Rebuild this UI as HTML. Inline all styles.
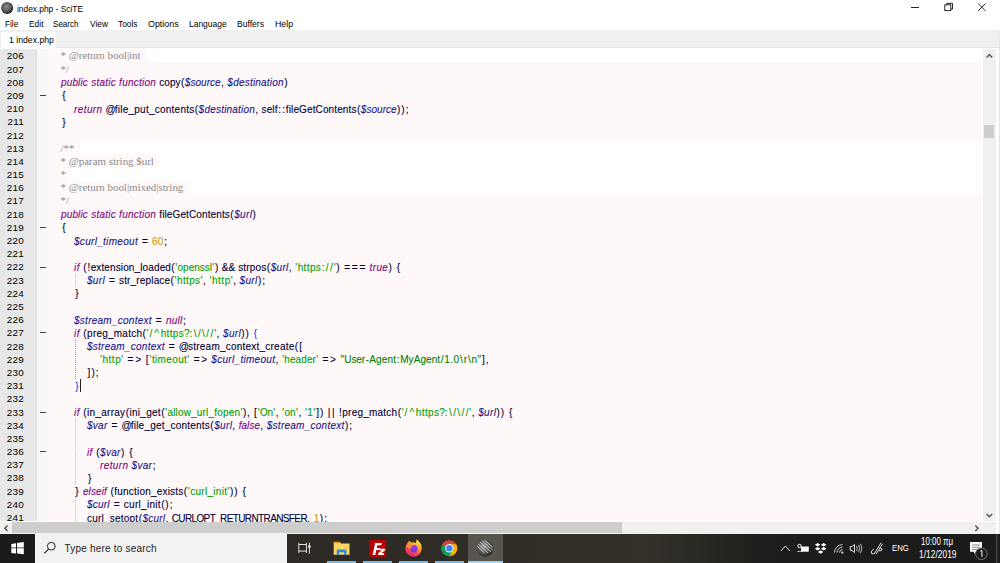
<!DOCTYPE html>
<html><head><meta charset="utf-8">
<style>
*{margin:0;padding:0;box-sizing:border-box}
html,body{width:1000px;height:563px;overflow:hidden;background:#fff;font-family:"Liberation Sans",sans-serif;position:relative}
div,span,svg{position:absolute}
.t{white-space:nowrap;line-height:12px}
#ttext{left:17px;top:3.0px;font-size:9.6px;color:#000;transform:scaleX(0.871);transform-origin:0 0}
.mi{top:17.5px;font-size:9.4px;color:#000;transform-origin:0 0}
#tabbar{left:0;top:29.8px;width:999.3px;height:18.7px;background:#f0f0f0;border-bottom:1.2px solid #e2e2e2}
#tab{left:1px;top:32px;width:55px;height:16.5px;background:#fff}
#tabt{left:9px;top:33.5px;font-size:9.4px;color:#000;transform:scaleX(0.926);transform-origin:0 0}
#editor{left:48px;top:48.5px;width:933.7px;height:472.8px;background:#fff8f8}
#lnm{left:0;top:48.5px;width:37px;height:472.8px;background:linear-gradient(90deg,#e7e7e7 0,#e7e7e7 35px,#e1e1e1 35px,#e1e1e1 37px)}
#fold{left:37px;top:48.5px;width:11px;height:472.8px;background:#f7f7f7}
#rwhite{left:981.5px;top:48.5px;width:1.5px;height:472.8px;background:#fff}
.ln{left:0;width:23.8px;text-align:right;font-size:9.9px;line-height:13.19px;height:13.19px;color:#000;letter-spacing:0.15px;white-space:nowrap}
.fm{left:40px;width:5.8px;height:1px;background:#444}
.cd{white-space:pre;font-size:10px;line-height:13.19px;height:13.19px;color:#000033;-webkit-text-stroke:0.1px}
.cd span{top:0}
.cw{height:13.19px;width:0;right:18.5px;background:#fff;width:auto}
.cl{left:60.6px;white-space:pre;font-family:"Liberation Serif",serif;font-size:10.9px;line-height:13.19px;height:13.19px;color:#8c8c8c}
.k{color:#7f007f;font-style:italic}
.v{color:#14148c;font-style:italic}
.s{color:#009f00}
.d{color:#007f00}
.n{color:#cc9900}
.b{color:#3030ff;background:#fff}
.ig{width:1.2px}
.caret{width:1px;background:#222}
#vsb{left:983px;top:48.5px;width:12.8px;height:472.8px;background:#f0f0f0}
#vthumb{left:983.5px;top:124.9px;width:10.3px;height:12.8px;background:#cdcdcd}
#rgrey{left:999.3px;top:29.8px;width:0.7px;height:504px;background:#e6e6e6}
#hsb{left:0;top:521.7px;width:995.8px;height:12.1px;background:#f0f0f0}
#hthumb{left:12.4px;top:522.4px;width:609.6px;height:10.7px;background:#cdcdcd}
#taskbar{left:0;top:533.8px;width:1000px;height:29.2px;background:linear-gradient(90deg,#2a2824 0px,#2d2a25 300px,#312e28 520px,#34312a 650px,#22211e 740px,#1c1c1c 790px,#1b1b1b 1000px)}
#start{left:0;top:533.8px;width:35px;height:29.2px;background:#1b1b1b}
#search{left:35px;top:533.8px;width:252px;height:29.2px;background:#f2f2f2}
#stext{left:64.5px;top:543px;font-size:10px;color:#1e1e1e;letter-spacing:0.2px}
.ul{top:561px;height:2px;background:#76b9ed}
#active{left:468.2px;top:533.8px;width:34.6px;height:29.2px;background:#58544e}
.tray{color:#fff;font-size:8.8px}
</style></head><body>
<svg style="left:0;top:0" width="16" height="16" viewBox="0 0 16 16">
<defs><radialGradient id="sph" cx="0.45" cy="0.42" r="0.6"><stop offset="0" stop-color="#8a8a8a"/><stop offset="0.6" stop-color="#4a4a4a"/><stop offset="1" stop-color="#141414"/></radialGradient></defs>
<clipPath id="tic"><circle cx="7.15" cy="7.9" r="5.6"/></clipPath>
<circle cx="7.15" cy="7.9" r="6" fill="url(#sph)"/>
<g clip-path="url(#tic)" stroke="#9a9a9a" stroke-width="0.6" opacity="0.6"><path d="M2 5 L10 13 M4 3 L12 11 M6.5 2 L13 8.5 M2 8 L7 13 M2 11 L10 3 M4 13 L12 5 M2 8 L8 2"/></g>
</svg>
<div id="ttext" class="t">index.php - SciTE</div>
<div class="mi t" style="left:5.4px;transform:scaleX(0.872)">File</div>
<div class="mi t" style="left:28.5px;transform:scaleX(0.895)">Edit</div>
<div class="mi t" style="left:53.4px;transform:scaleX(0.86)">Search</div>
<div class="mi t" style="left:89.5px;transform:scaleX(0.89)">View</div>
<div class="mi t" style="left:118px;transform:scaleX(0.889)">Tools</div>
<div class="mi t" style="left:148px;transform:scaleX(0.948)">Options</div>
<div class="mi t" style="left:189px;transform:scaleX(0.901)">Language</div>
<div class="mi t" style="left:237px;transform:scaleX(0.912)">Buffers</div>
<div class="mi t" style="left:274.7px;transform:scaleX(0.936)">Help</div>
<svg style="left:900px;top:0" width="100" height="20" viewBox="0 0 100 20">
<line x1="11" y1="7.5" x2="19" y2="7.5" stroke="#111" stroke-width="0.9"/>
<rect x="44.8" y="4.8" width="6" height="5.8" fill="none" stroke="#111" stroke-width="0.9"/>
<path d="M46.8 4.8 V3.3 H52.5 V9 H50.8" fill="none" stroke="#111" stroke-width="0.9"/>
<path d="M78.2 3.6 L85.5 10.8 M85.5 3.6 L78.2 10.8" stroke="#111" stroke-width="0.9"/>
</svg>
<div id="tabbar"></div>
<div id="tab"></div>
<div id="tabt" class="t">1 index.php</div>
<div id="lnm"></div>
<div id="fold"></div>
<div id="editor"></div>
<div id="rwhite"></div>
<div class="ln" style="top:49.40px">206</div>
<div class="cw" style="top:48.90px;left:146.03px"></div>
<div class="cl" style="top:49.40px">* @return bool|int</div>
<div class="ln" style="top:62.59px">207</div>
<div class="cl" style="top:62.59px">*/</div>
<div class="ln" style="top:75.78px">208</div>
<div class="cd" id="l208" style="top:76.28px;left:60.95px"><span class="k" style="left:0.00px;letter-spacing:0.128px;padding-left:0.064px">public</span><span class="k" style="left:30.11px;letter-spacing:0.233px;padding-left:0.117px">static</span><span class="k" style="left:58.07px;letter-spacing:0.244px;padding-left:0.122px">function</span><span class="" style="left:98.27px;letter-spacing:0.050px;padding-left:0.025px">copy</span><span class="" style="left:119.59px;letter-spacing:0.829px;padding-left:0.415px">(</span><span class="v" style="left:123.75px;letter-spacing:0.262px;padding-left:0.131px">$</span><span class="v" style="left:129.57px;letter-spacing:0.025px;padding-left:0.012px">source</span><span class="" style="left:159.74px;letter-spacing:0.558px;padding-left:0.279px">,</span><span class="v" style="left:166.29px;letter-spacing:0.262px;padding-left:0.131px">$</span><span class="v" style="left:172.12px;letter-spacing:0.210px;padding-left:0.105px">destination</span><span class="" style="left:222.80px;letter-spacing:0.829px;padding-left:0.415px">)</span></div>
<div class="ln" style="top:88.97px">209</div>
<div class="fm" style="top:95.07px"></div>
<div class="cd" id="l209" style="top:89.47px;left:60.95px"><span class="" style="left:0.00px;letter-spacing:2.484px;padding-left:1.242px">{</span></div>
<div class="ln" style="top:102.16px">210</div>
<div class="cd" id="l210" style="top:102.66px;left:73.90px"><span class="k" style="left:0.00px;letter-spacing:0.381px;padding-left:0.191px">return</span><span class="" style="left:31.63px;letter-spacing:-0.991px;padding-left:-0.496px">@</span><span class="" style="left:40.79px;letter-spacing:0.238px;padding-left:0.119px">file_put_contents</span><span class="" style="left:120.44px;letter-spacing:0.829px;padding-left:0.415px">(</span><span class="v" style="left:124.60px;letter-spacing:0.262px;padding-left:0.131px">$</span><span class="v" style="left:130.43px;letter-spacing:0.210px;padding-left:0.105px">destination</span><span class="" style="left:181.11px;letter-spacing:0.558px;padding-left:0.279px">,</span><span class="" style="left:187.67px;letter-spacing:0.090px;padding-left:0.045px">self</span><span class="" style="left:203.59px;letter-spacing:1.381px;padding-left:0.691px">:</span><span class="" style="left:207.75px;letter-spacing:1.381px;padding-left:0.691px">:</span><span class="" style="left:211.91px;letter-spacing:0.119px;padding-left:0.059px">fileGetContents</span><span class="" style="left:282.61px;letter-spacing:0.829px;padding-left:0.415px">(</span><span class="v" style="left:286.77px;letter-spacing:0.262px;padding-left:0.131px">$</span><span class="v" style="left:292.60px;letter-spacing:0.025px;padding-left:0.012px">source</span><span class="" style="left:322.76px;letter-spacing:0.829px;padding-left:0.415px">)</span><span class="" style="left:326.92px;letter-spacing:0.829px;padding-left:0.415px">)</span><span class="" style="left:331.08px;letter-spacing:1.381px;padding-left:0.691px">;</span></div>
<div class="ln" style="top:115.35px">211</div>
<div class="cd" id="l211" style="top:115.85px;left:60.95px"><span class="" style="left:0.00px;letter-spacing:2.484px;padding-left:1.242px">}</span></div>
<div class="ln" style="top:128.54px">212</div>
<div class="ln" style="top:141.73px">213</div>
<div class="cw" style="top:141.23px;left:79.93px"></div>
<div class="cl" style="top:141.73px">/**</div>
<div class="ln" style="top:154.92px">214</div>
<div class="cw" style="top:154.42px;left:159.28px"></div>
<div class="cl" style="top:154.92px">* @param string $url</div>
<div class="ln" style="top:168.11px">215</div>
<div class="cw" style="top:167.61px;left:71.45px"></div>
<div class="cl" style="top:168.11px">*</div>
<div class="ln" style="top:181.30px">216</div>
<div class="cw" style="top:180.80px;left:188.78px"></div>
<div class="cl" style="top:181.30px">* @return bool|mixed|string</div>
<div class="ln" style="top:194.49px">217</div>
<div class="cl" style="top:194.49px">*/</div>
<div class="ln" style="top:207.68px">218</div>
<div class="cd" id="l218" style="top:208.18px;left:60.95px"><span class="k" style="left:0.00px;letter-spacing:0.128px;padding-left:0.064px">public</span><span class="k" style="left:30.11px;letter-spacing:0.233px;padding-left:0.117px">static</span><span class="k" style="left:58.07px;letter-spacing:0.244px;padding-left:0.122px">function</span><span class="" style="left:98.27px;letter-spacing:0.119px;padding-left:0.059px">fileGetContents</span><span class="" style="left:168.97px;letter-spacing:0.829px;padding-left:0.415px">(</span><span class="v" style="left:173.13px;letter-spacing:0.262px;padding-left:0.131px">$</span><span class="v" style="left:178.96px;letter-spacing:0.354px;padding-left:0.177px">url</span><span class="" style="left:191.13px;letter-spacing:0.829px;padding-left:0.415px">)</span></div>
<div class="ln" style="top:220.87px">219</div>
<div class="fm" style="top:226.97px"></div>
<div class="cd" id="l219" style="top:221.37px;left:60.95px"><span class="" style="left:0.00px;letter-spacing:2.484px;padding-left:1.242px">{</span></div>
<div class="ln" style="top:234.06px">220</div>
<div class="cd" id="l220" style="top:234.56px;left:73.90px"><span class="v" style="left:0.00px;letter-spacing:0.262px;padding-left:0.131px">$</span><span class="v" style="left:5.82px;letter-spacing:0.304px;padding-left:0.152px">curl_timeout</span><span class="" style="left:67.16px;letter-spacing:1.782px;padding-left:0.891px">=</span><span class="n" style="left:78.00px;letter-spacing:0.262px;padding-left:0.131px">60</span><span class="" style="left:89.65px;letter-spacing:1.381px;padding-left:0.691px">;</span></div>
<div class="ln" style="top:247.25px">221</div>
<div class="ln" style="top:260.44px">222</div>
<div class="fm" style="top:266.54px"></div>
<div class="cd" id="l222" style="top:260.94px;left:73.90px"><span class="k" style="left:0.00px;letter-spacing:0.358px;padding-left:0.179px">if</span><span class="" style="left:8.94px;letter-spacing:0.829px;padding-left:0.415px">(</span><span class="" style="left:13.10px;letter-spacing:0.845px;padding-left:0.422px">!</span><span class="" style="left:16.72px;letter-spacing:0.121px;padding-left:0.060px">extension_loaded</span><span class="" style="left:97.05px;letter-spacing:0.829px;padding-left:0.415px">(</span><span class="s" style="left:101.21px;letter-spacing:0.555px;padding-left:0.278px">&#x27;</span><span class="s" style="left:103.67px;letter-spacing:-0.002px;padding-left:-0.001px">openssl</span><span class="s" style="left:138.13px;letter-spacing:0.555px;padding-left:0.278px">&#x27;</span><span class="" style="left:140.59px;letter-spacing:0.829px;padding-left:0.415px">)</span><span class="" style="left:147.97px;letter-spacing:-0.158px;padding-left:-0.079px">&amp;</span><span class="" style="left:154.49px;letter-spacing:-0.158px;padding-left:-0.079px">&amp;</span><span class="" style="left:164.22px;letter-spacing:0.168px;padding-left:0.084px">strpos</span><span class="" style="left:192.46px;letter-spacing:0.829px;padding-left:0.415px">(</span><span class="v" style="left:196.62px;letter-spacing:0.262px;padding-left:0.131px">$</span><span class="v" style="left:202.44px;letter-spacing:0.354px;padding-left:0.177px">url</span><span class="" style="left:214.62px;letter-spacing:0.558px;padding-left:0.279px">,</span><span class="s" style="left:221.17px;letter-spacing:0.555px;padding-left:0.278px">&#x27;</span><span class="s" style="left:223.64px;letter-spacing:0.357px;padding-left:0.178px">https</span><span class="s" style="left:247.10px;letter-spacing:1.381px;padding-left:0.691px">:</span><span class="s" style="left:251.26px;letter-spacing:1.381px;padding-left:0.691px">/</span><span class="s" style="left:255.42px;letter-spacing:1.381px;padding-left:0.691px">/</span><span class="s" style="left:259.58px;letter-spacing:0.555px;padding-left:0.278px">&#x27;</span><span class="" style="left:262.04px;letter-spacing:0.829px;padding-left:0.415px">)</span><span class="" style="left:269.42px;letter-spacing:1.782px;padding-left:0.891px">=</span><span class="" style="left:277.05px;letter-spacing:1.782px;padding-left:0.891px">=</span><span class="" style="left:284.67px;letter-spacing:1.782px;padding-left:0.891px">=</span><span class="k" style="left:295.51px;letter-spacing:0.374px;padding-left:0.187px">true</span><span class="" style="left:314.24px;letter-spacing:0.829px;padding-left:0.415px">)</span><span class="" style="left:321.62px;letter-spacing:2.484px;padding-left:1.242px">{</span></div>
<div class="ln" style="top:273.63px">223</div>
<div class="cd" id="l223" style="top:274.13px;left:86.85px"><span class="v" style="left:0.00px;letter-spacing:0.262px;padding-left:0.131px">$</span><span class="v" style="left:5.82px;letter-spacing:0.354px;padding-left:0.177px">url</span><span class="" style="left:21.22px;letter-spacing:1.782px;padding-left:0.891px">=</span><span class="" style="left:32.06px;letter-spacing:0.165px;padding-left:0.083px">str_replace</span><span class="" style="left:83.34px;letter-spacing:0.829px;padding-left:0.415px">(</span><span class="s" style="left:87.50px;letter-spacing:0.555px;padding-left:0.278px">&#x27;</span><span class="s" style="left:89.97px;letter-spacing:0.357px;padding-left:0.178px">https</span><span class="s" style="left:113.43px;letter-spacing:0.555px;padding-left:0.278px">&#x27;</span><span class="" style="left:115.90px;letter-spacing:0.558px;padding-left:0.279px">,</span><span class="s" style="left:122.45px;letter-spacing:0.555px;padding-left:0.278px">&#x27;</span><span class="s" style="left:124.92px;letter-spacing:0.503px;padding-left:0.251px">http</span><span class="s" style="left:143.61px;letter-spacing:0.555px;padding-left:0.278px">&#x27;</span><span class="" style="left:146.07px;letter-spacing:0.558px;padding-left:0.279px">,</span><span class="v" style="left:152.63px;letter-spacing:0.262px;padding-left:0.131px">$</span><span class="v" style="left:158.45px;letter-spacing:0.354px;padding-left:0.177px">url</span><span class="" style="left:170.63px;letter-spacing:0.829px;padding-left:0.415px">)</span><span class="" style="left:174.79px;letter-spacing:1.381px;padding-left:0.691px">;</span></div>
<div class="ln" style="top:286.82px">224</div>
<div class="cd" id="l224" style="top:287.32px;left:73.90px"><span class="" style="left:0.00px;letter-spacing:2.484px;padding-left:1.242px">}</span></div>
<div class="ln" style="top:300.01px">225</div>
<div class="ln" style="top:313.20px">226</div>
<div class="cd" id="l226" style="top:313.70px;left:73.90px"><span class="v" style="left:0.00px;letter-spacing:0.262px;padding-left:0.131px">$</span><span class="v" style="left:5.82px;letter-spacing:0.261px;padding-left:0.131px">stream_context</span><span class="" style="left:81.07px;letter-spacing:1.782px;padding-left:0.891px">=</span><span class="k" style="left:91.91px;letter-spacing:0.250px;padding-left:0.125px">null</span><span class="" style="left:108.48px;letter-spacing:1.381px;padding-left:0.691px">;</span></div>
<div class="ln" style="top:326.39px">227</div>
<div class="fm" style="top:332.49px"></div>
<div class="cd" id="l227" style="top:326.89px;left:73.90px"><span class="k" style="left:0.00px;letter-spacing:0.358px;padding-left:0.179px">if</span><span class="" style="left:8.94px;letter-spacing:0.829px;padding-left:0.415px">(</span><span class="" style="left:13.10px;letter-spacing:0.227px;padding-left:0.113px">preg_match</span><span class="" style="left:68.17px;letter-spacing:0.829px;padding-left:0.415px">(</span><span class="s" style="left:72.33px;letter-spacing:0.555px;padding-left:0.278px">&#x27;</span><span class="s" style="left:74.80px;letter-spacing:1.381px;padding-left:0.691px">/</span><span class="s" style="left:78.96px;letter-spacing:2.929px;padding-left:1.465px">^</span><span class="s" style="left:86.58px;letter-spacing:0.357px;padding-left:0.178px">https</span><span class="s" style="left:110.04px;letter-spacing:-0.566px;padding-left:-0.283px">?</span><span class="s" style="left:115.04px;letter-spacing:1.381px;padding-left:0.691px">:</span><span class="s" style="left:119.20px;letter-spacing:1.381px;padding-left:0.691px">\</span><span class="s" style="left:123.36px;letter-spacing:1.381px;padding-left:0.691px">/</span><span class="s" style="left:127.52px;letter-spacing:1.381px;padding-left:0.691px">\</span><span class="s" style="left:131.67px;letter-spacing:1.381px;padding-left:0.691px">/</span><span class="s" style="left:135.83px;letter-spacing:1.381px;padding-left:0.691px">/</span><span class="s" style="left:139.99px;letter-spacing:0.555px;padding-left:0.278px">&#x27;</span><span class="" style="left:142.46px;letter-spacing:0.558px;padding-left:0.279px">,</span><span class="v" style="left:149.02px;letter-spacing:0.262px;padding-left:0.131px">$</span><span class="v" style="left:154.84px;letter-spacing:0.354px;padding-left:0.177px">url</span><span class="" style="left:167.01px;letter-spacing:0.829px;padding-left:0.415px">)</span><span class="" style="left:171.17px;letter-spacing:0.829px;padding-left:0.415px">)</span><span class="b" style="left:178.55px;letter-spacing:2.484px;padding-left:1.242px">{</span></div>
<div class="ln" style="top:339.58px">228</div>
<div class="cd" id="l228" style="top:340.08px;left:86.85px"><span class="v" style="left:0.00px;letter-spacing:0.262px;padding-left:0.131px">$</span><span class="v" style="left:5.82px;letter-spacing:0.261px;padding-left:0.131px">stream_context</span><span class="" style="left:81.07px;letter-spacing:1.782px;padding-left:0.891px">=</span><span class="" style="left:91.91px;letter-spacing:-0.991px;padding-left:-0.496px">@</span><span class="" style="left:101.07px;letter-spacing:0.226px;padding-left:0.113px">stream_context_create</span><span class="" style="left:207.54px;letter-spacing:0.829px;padding-left:0.415px">(</span><span class="" style="left:211.70px;letter-spacing:1.381px;padding-left:0.691px">[</span></div>
<div class="ln" style="top:352.77px">229</div>
<div class="cd" id="l229" style="top:353.27px;left:99.80px"><span class="s" style="left:0.00px;letter-spacing:0.555px;padding-left:0.278px">&#x27;</span><span class="s" style="left:2.46px;letter-spacing:0.503px;padding-left:0.251px">http</span><span class="s" style="left:21.16px;letter-spacing:0.555px;padding-left:0.278px">&#x27;</span><span class="" style="left:26.84px;letter-spacing:1.782px;padding-left:0.891px">=</span><span class="" style="left:34.46px;letter-spacing:1.782px;padding-left:0.891px">&gt;</span><span class="" style="left:45.30px;letter-spacing:1.381px;padding-left:0.691px">[</span><span class="s" style="left:49.46px;letter-spacing:0.555px;padding-left:0.278px">&#x27;</span><span class="s" style="left:51.93px;letter-spacing:0.367px;padding-left:0.183px">timeout</span><span class="s" style="left:87.29px;letter-spacing:0.555px;padding-left:0.278px">&#x27;</span><span class="" style="left:92.97px;letter-spacing:1.782px;padding-left:0.891px">=</span><span class="" style="left:100.59px;letter-spacing:1.782px;padding-left:0.891px">&gt;</span><span class="v" style="left:111.44px;letter-spacing:0.262px;padding-left:0.131px">$</span><span class="v" style="left:117.26px;letter-spacing:0.304px;padding-left:0.152px">curl_timeout</span><span class="" style="left:175.38px;letter-spacing:0.558px;padding-left:0.279px">,</span><span class="s" style="left:181.93px;letter-spacing:0.555px;padding-left:0.278px">&#x27;</span><span class="s" style="left:184.40px;letter-spacing:0.099px;padding-left:0.049px">header</span><span class="s" style="left:216.13px;letter-spacing:0.555px;padding-left:0.278px">&#x27;</span><span class="" style="left:221.81px;letter-spacing:1.782px;padding-left:0.891px">=</span><span class="" style="left:229.43px;letter-spacing:1.782px;padding-left:0.891px">&gt;</span><span class="d" style="left:240.28px;letter-spacing:0.659px;padding-left:0.329px">&quot;</span><span class="d" style="left:244.48px;letter-spacing:-0.076px;padding-left:-0.038px">User</span><span class="d" style="left:265.30px;letter-spacing:0.829px;padding-left:0.415px">-</span><span class="d" style="left:269.46px;letter-spacing:0.130px;padding-left:0.065px">Agent</span><span class="d" style="left:296.24px;letter-spacing:1.381px;padding-left:0.691px">:</span><span class="d" style="left:300.40px;letter-spacing:0.060px;padding-left:0.030px">MyAgent</span><span class="d" style="left:340.28px;letter-spacing:1.381px;padding-left:0.691px">/</span><span class="d" style="left:344.44px;letter-spacing:0.262px;padding-left:0.131px">1</span><span class="d" style="left:350.26px;letter-spacing:0.558px;padding-left:0.279px">.</span><span class="d" style="left:353.60px;letter-spacing:0.262px;padding-left:0.131px">0</span><span class="d" style="left:359.42px;letter-spacing:1.381px;padding-left:0.691px">\</span><span class="d" style="left:363.58px;letter-spacing:0.561px;padding-left:0.281px">r</span><span class="d" style="left:367.47px;letter-spacing:1.381px;padding-left:0.691px">\</span><span class="d" style="left:371.63px;letter-spacing:0.231px;padding-left:0.115px">n</span><span class="d" style="left:377.43px;letter-spacing:0.659px;padding-left:0.329px">&quot;</span><span class="" style="left:381.63px;letter-spacing:1.381px;padding-left:0.691px">]</span><span class="" style="left:385.79px;letter-spacing:0.558px;padding-left:0.279px">,</span></div>
<div class="ln" style="top:365.96px">230</div>
<div class="cd" id="l230" style="top:366.46px;left:86.85px"><span class="" style="left:0.00px;letter-spacing:1.381px;padding-left:0.691px">]</span><span class="" style="left:4.16px;letter-spacing:0.829px;padding-left:0.415px">)</span><span class="" style="left:8.32px;letter-spacing:1.381px;padding-left:0.691px">;</span></div>
<div class="ln" style="top:379.15px">231</div>
<div class="cd" id="l231" style="top:379.65px;left:73.90px"><span class="b" style="left:0.00px;letter-spacing:2.484px;padding-left:1.242px">}</span></div>
<div class="ln" style="top:392.34px">232</div>
<div class="ln" style="top:405.53px">233</div>
<div class="fm" style="top:411.63px"></div>
<div class="cd" id="l233" style="top:406.03px;left:73.90px"><span class="k" style="left:0.00px;letter-spacing:0.358px;padding-left:0.179px">if</span><span class="" style="left:8.94px;letter-spacing:0.829px;padding-left:0.415px">(</span><span class="" style="left:13.10px;letter-spacing:0.265px;padding-left:0.133px">in_array</span><span class="" style="left:51.35px;letter-spacing:0.829px;padding-left:0.415px">(</span><span class="" style="left:55.51px;letter-spacing:0.265px;padding-left:0.132px">ini_get</span><span class="" style="left:86.83px;letter-spacing:0.829px;padding-left:0.415px">(</span><span class="s" style="left:90.99px;letter-spacing:0.555px;padding-left:0.278px">&#x27;</span><span class="s" style="left:93.45px;letter-spacing:0.182px;padding-left:0.091px">allow_url_fopen</span><span class="s" style="left:166.23px;letter-spacing:0.555px;padding-left:0.278px">&#x27;</span><span class="" style="left:168.70px;letter-spacing:0.829px;padding-left:0.415px">)</span><span class="" style="left:172.85px;letter-spacing:0.558px;padding-left:0.279px">,</span><span class="" style="left:179.41px;letter-spacing:1.381px;padding-left:0.691px">[</span><span class="s" style="left:183.57px;letter-spacing:0.555px;padding-left:0.278px">&#x27;</span><span class="s" style="left:186.04px;letter-spacing:-0.164px;padding-left:-0.082px">On</span><span class="s" style="left:199.05px;letter-spacing:0.555px;padding-left:0.278px">&#x27;</span><span class="" style="left:201.51px;letter-spacing:0.558px;padding-left:0.279px">,</span><span class="s" style="left:208.07px;letter-spacing:0.555px;padding-left:0.278px">&#x27;</span><span class="s" style="left:210.53px;letter-spacing:0.092px;padding-left:0.046px">on</span><span class="s" style="left:221.84px;letter-spacing:0.555px;padding-left:0.278px">&#x27;</span><span class="" style="left:224.30px;letter-spacing:0.558px;padding-left:0.279px">,</span><span class="s" style="left:230.86px;letter-spacing:0.555px;padding-left:0.278px">&#x27;</span><span class="s" style="left:233.33px;letter-spacing:0.262px;padding-left:0.131px">1</span><span class="s" style="left:239.15px;letter-spacing:0.555px;padding-left:0.278px">&#x27;</span><span class="" style="left:241.61px;letter-spacing:1.381px;padding-left:0.691px">]</span><span class="" style="left:245.77px;letter-spacing:0.829px;padding-left:0.415px">)</span><span class="" style="left:253.15px;letter-spacing:1.562px;padding-left:0.781px">|</span><span class="" style="left:257.31px;letter-spacing:1.562px;padding-left:0.781px">|</span><span class="" style="left:264.69px;letter-spacing:0.845px;padding-left:0.422px">!</span><span class="" style="left:268.31px;letter-spacing:0.227px;padding-left:0.113px">preg_match</span><span class="" style="left:323.39px;letter-spacing:0.829px;padding-left:0.415px">(</span><span class="s" style="left:327.55px;letter-spacing:0.555px;padding-left:0.278px">&#x27;</span><span class="s" style="left:330.01px;letter-spacing:1.381px;padding-left:0.691px">/</span><span class="s" style="left:334.17px;letter-spacing:2.929px;padding-left:1.465px">^</span><span class="s" style="left:341.80px;letter-spacing:0.357px;padding-left:0.178px">https</span><span class="s" style="left:365.26px;letter-spacing:-0.566px;padding-left:-0.283px">?</span><span class="s" style="left:370.26px;letter-spacing:1.381px;padding-left:0.691px">:</span><span class="s" style="left:374.41px;letter-spacing:1.381px;padding-left:0.691px">\</span><span class="s" style="left:378.57px;letter-spacing:1.381px;padding-left:0.691px">/</span><span class="s" style="left:382.73px;letter-spacing:1.381px;padding-left:0.691px">\</span><span class="s" style="left:386.89px;letter-spacing:1.381px;padding-left:0.691px">/</span><span class="s" style="left:391.05px;letter-spacing:1.381px;padding-left:0.691px">/</span><span class="s" style="left:395.21px;letter-spacing:0.555px;padding-left:0.278px">&#x27;</span><span class="" style="left:397.68px;letter-spacing:0.558px;padding-left:0.279px">,</span><span class="v" style="left:404.23px;letter-spacing:0.262px;padding-left:0.131px">$</span><span class="v" style="left:410.06px;letter-spacing:0.354px;padding-left:0.177px">url</span><span class="" style="left:422.23px;letter-spacing:0.829px;padding-left:0.415px">)</span><span class="" style="left:426.39px;letter-spacing:0.829px;padding-left:0.415px">)</span><span class="" style="left:433.77px;letter-spacing:2.484px;padding-left:1.242px">{</span></div>
<div class="ln" style="top:418.72px">234</div>
<div class="cd" id="l234" style="top:419.22px;left:86.85px"><span class="v" style="left:0.00px;letter-spacing:0.262px;padding-left:0.131px">$</span><span class="v" style="left:5.82px;letter-spacing:0.288px;padding-left:0.144px">var</span><span class="" style="left:23.80px;letter-spacing:1.782px;padding-left:0.891px">=</span><span class="" style="left:34.64px;letter-spacing:-0.991px;padding-left:-0.496px">@</span><span class="" style="left:43.80px;letter-spacing:0.217px;padding-left:0.108px">file_get_contents</span><span class="" style="left:123.10px;letter-spacing:0.829px;padding-left:0.415px">(</span><span class="v" style="left:127.26px;letter-spacing:0.262px;padding-left:0.131px">$</span><span class="v" style="left:133.08px;letter-spacing:0.354px;padding-left:0.177px">url</span><span class="" style="left:145.25px;letter-spacing:0.558px;padding-left:0.279px">,</span><span class="k" style="left:151.81px;letter-spacing:0.059px;padding-left:0.030px">false</span><span class="" style="left:173.23px;letter-spacing:0.558px;padding-left:0.279px">,</span><span class="v" style="left:179.79px;letter-spacing:0.262px;padding-left:0.131px">$</span><span class="v" style="left:185.61px;letter-spacing:0.261px;padding-left:0.131px">stream_context</span><span class="" style="left:257.63px;letter-spacing:0.829px;padding-left:0.415px">)</span><span class="" style="left:261.79px;letter-spacing:1.381px;padding-left:0.691px">;</span></div>
<div class="ln" style="top:431.91px">235</div>
<div class="ln" style="top:445.10px">236</div>
<div class="fm" style="top:451.20px"></div>
<div class="cd" id="l236" style="top:445.60px;left:86.85px"><span class="k" style="left:0.00px;letter-spacing:0.358px;padding-left:0.179px">if</span><span class="" style="left:8.94px;letter-spacing:0.829px;padding-left:0.415px">(</span><span class="v" style="left:13.10px;letter-spacing:0.262px;padding-left:0.131px">$</span><span class="v" style="left:18.92px;letter-spacing:0.288px;padding-left:0.144px">var</span><span class="" style="left:33.67px;letter-spacing:0.829px;padding-left:0.415px">)</span><span class="" style="left:41.05px;letter-spacing:2.484px;padding-left:1.242px">{</span></div>
<div class="ln" style="top:458.29px">237</div>
<div class="cd" id="l237" style="top:458.79px;left:99.80px"><span class="k" style="left:0.00px;letter-spacing:0.381px;padding-left:0.191px">return</span><span class="v" style="left:31.63px;letter-spacing:0.262px;padding-left:0.131px">$</span><span class="v" style="left:37.45px;letter-spacing:0.288px;padding-left:0.144px">var</span><span class="" style="left:52.21px;letter-spacing:1.381px;padding-left:0.691px">;</span></div>
<div class="ln" style="top:471.48px">238</div>
<div class="cd" id="l238" style="top:471.98px;left:86.85px"><span class="" style="left:0.00px;letter-spacing:2.484px;padding-left:1.242px">}</span></div>
<div class="ln" style="top:484.67px">239</div>
<div class="cd" id="l239" style="top:485.17px;left:73.90px"><span class="" style="left:0.00px;letter-spacing:2.484px;padding-left:1.242px">}</span><span class="k" style="left:9.04px;letter-spacing:0.084px;padding-left:0.042px">elseif</span><span class="" style="left:36.11px;letter-spacing:0.829px;padding-left:0.415px">(</span><span class="" style="left:40.27px;letter-spacing:0.207px;padding-left:0.103px">function_exists</span><span class="" style="left:109.52px;letter-spacing:0.829px;padding-left:0.415px">(</span><span class="s" style="left:113.68px;letter-spacing:0.555px;padding-left:0.278px">&#x27;</span><span class="s" style="left:116.14px;letter-spacing:0.298px;padding-left:0.149px">curl_init</span><span class="s" style="left:153.28px;letter-spacing:0.555px;padding-left:0.278px">&#x27;</span><span class="" style="left:155.75px;letter-spacing:0.829px;padding-left:0.415px">)</span><span class="" style="left:159.91px;letter-spacing:0.829px;padding-left:0.415px">)</span><span class="" style="left:167.29px;letter-spacing:2.484px;padding-left:1.242px">{</span></div>
<div class="ln" style="top:497.86px">240</div>
<div class="cd" id="l240" style="top:498.36px;left:86.85px"><span class="v" style="left:0.00px;letter-spacing:0.262px;padding-left:0.131px">$</span><span class="v" style="left:5.82px;letter-spacing:0.205px;padding-left:0.103px">curl</span><span class="" style="left:25.98px;letter-spacing:1.782px;padding-left:0.891px">=</span><span class="" style="left:36.82px;letter-spacing:0.298px;padding-left:0.149px">curl_init</span><span class="" style="left:73.96px;letter-spacing:0.829px;padding-left:0.415px">(</span><span class="" style="left:78.12px;letter-spacing:0.829px;padding-left:0.415px">)</span><span class="" style="left:82.28px;letter-spacing:1.381px;padding-left:0.691px">;</span></div>
<div class="ln" style="top:511.05px">241</div>
<div class="cd" id="l241" style="top:511.55px;left:86.85px"><span class="" style="left:0.00px;letter-spacing:0.224px;padding-left:0.112px">curl_setopt</span><span class="" style="left:51.38px;letter-spacing:0.829px;padding-left:0.415px">(</span><span class="v" style="left:55.54px;letter-spacing:0.262px;padding-left:0.131px">$</span><span class="v" style="left:61.36px;letter-spacing:0.205px;padding-left:0.103px">curl</span><span class="" style="left:78.29px;letter-spacing:0.558px;padding-left:0.279px">,</span><span class="" style="left:84.85px;letter-spacing:-0.617px;padding-left:-0.308px">CURLOPT_RETURNTRANSFER</span><span class="" style="left:220.18px;letter-spacing:0.558px;padding-left:0.279px">,</span><span class="n" style="left:226.74px;letter-spacing:0.262px;padding-left:0.131px">1</span><span class="" style="left:232.56px;letter-spacing:0.829px;padding-left:0.415px">)</span><span class="" style="left:236.72px;letter-spacing:1.381px;padding-left:0.691px">;</span></div>
<div class="ig" style="left:74.60px;top:273.63px;height:13.19px;background:repeating-linear-gradient(#b8b8b8 0 1px,transparent 1px 2px)"></div>
<div class="ig" style="left:74.60px;top:418.72px;height:65.95px;background:repeating-linear-gradient(#b8b8b8 0 1px,transparent 1px 2px)"></div>
<div class="ig" style="left:74.60px;top:497.86px;height:26.38px;background:repeating-linear-gradient(#b8b8b8 0 1px,transparent 1px 2px)"></div>
<div class="ig" style="left:74.50px;top:339.58px;height:39.57px;background:repeating-linear-gradient(#8585ff 0 1px,transparent 1px 2px)"></div>
<div class="caret" style="left:79.8px;top:379.45px;height:12.4px"></div>
<div id="vsb"></div>
<div id="vthumb"></div>
<svg style="left:983px;top:48.5px" width="13" height="473" viewBox="0 0 13 473">
<path d="M3.6 8.4 L6.4 5.6 L9.2 8.4" fill="none" stroke="#555" stroke-width="1.45"/>
<path d="M3.6 465 L6.4 467.8 L9.2 465" fill="none" stroke="#555" stroke-width="1.45"/>
</svg>
<div id="rgrey"></div>
<div id="hsb"></div>
<div id="hthumb"></div>
<svg style="left:0;top:521.5px" width="996" height="13" viewBox="0 0 996 13">
<path d="M7.6 3.6 L4.8 6.3 L7.6 9" fill="none" stroke="#555" stroke-width="1.45"/>
<path d="M975.3 3.6 L978.1 6.3 L975.3 9" fill="none" stroke="#555" stroke-width="1.45"/>
</svg>
<div id="taskbar"></div>
<div id="start"></div>
<div id="search"></div>
<div id="stext" class="t">Type here to search</div>
<div id="active"></div>
<div class="ul" style="left:327px;width:29px"></div>
<div class="ul" style="left:363px;width:29px"></div>
<div class="ul" style="left:399px;width:29px"></div>
<div class="ul" style="left:435px;width:29px"></div>
<div class="ul" style="left:468.2px;width:34.6px;background:#99d1ff"></div>

<svg style="left:0;top:533px" width="1000" height="30" viewBox="0 533 1000 30">
<defs>
<radialGradient id="ffo" cx="0.35" cy="0.25" r="0.85"><stop offset="0" stop-color="#fff44f"/><stop offset="0.35" stop-color="#ff980e"/><stop offset="0.7" stop-color="#ff3750"/><stop offset="1" stop-color="#e31587"/></radialGradient>
<radialGradient id="ffp" cx="0.4" cy="0.3" r="0.8"><stop offset="0" stop-color="#b833e1"/><stop offset="1" stop-color="#5a3ee0"/></radialGradient>
<radialGradient id="sph2" cx="0.42" cy="0.38" r="0.62"><stop offset="0" stop-color="#a0a0a0"/><stop offset="0.55" stop-color="#5e5e5e"/><stop offset="1" stop-color="#262626"/></radialGradient>
</defs>
<!-- windows logo -->
<path d="M11.3 543.9 L16 543.25 L16 547.5 L11.3 547.5 Z M17.05 543.1 L23.8 542.1 L23.8 547.5 L17.05 547.5 Z M11.3 548.2 L16 548.2 L16 553.5 L11.3 552.9 Z M17.05 548.2 L23.8 548.2 L23.8 554.2 L17.05 553.6 Z" fill="#fff"/>
<!-- search -->
<circle cx="51.3" cy="546.2" r="3.9" fill="none" stroke="#222" stroke-width="1"/>
<path d="M48.5 549.1 L44.3 553.4" stroke="#222" stroke-width="1.1"/>
<!-- task view -->
<path d="M298.8 542.8 V553 M306.4 542.8 V553 M298.8 544.5 H306.4 M298.8 551.1 H306.4 M309.4 542.5 V553.7" fill="none" stroke="#dedede" stroke-width="1"/>
<circle cx="309.4" cy="546.6" r="1.3" fill="#fff"/>
<!-- explorer -->
<path d="M333.7 542.3 H340 L341 543.6 H349.5 V554.7 H333.7 Z" fill="#fcd462"/>
<path d="M333.7 541.8 H339.6 L340.6 543.2 H333.7 Z" fill="#e8a21a"/>
<path d="M336.8 549.6 H346.4 V554.9 H344.1 V552.2 H339.1 V554.9 H336.8 Z" fill="#2b8adf"/>
<!-- filezilla -->
<rect x="369.2" y="540" width="17" height="17" fill="#bf0000"/>
<path d="M372.6 555 L375.2 543 H381.8 L381.3 545.2 H377.4 L376.8 548 H380.2 L379.8 550.1 H376.3 L375.3 555 Z" fill="#fff"/>
<path d="M379.6 548.8 H385.2 L384.8 550.7 L381.1 553.2 H384.2 L383.8 555 H377.9 L378.3 553.1 L382 550.6 H379.2 Z" fill="#fff"/>
<!-- firefox -->
<linearGradient id="ffl" x1="0.8" y1="0" x2="0.2" y2="1"><stop offset="0" stop-color="#fff44f"/><stop offset="0.35" stop-color="#ffa436"/><stop offset="0.65" stop-color="#ff4a4a"/><stop offset="1" stop-color="#e3168a"/></linearGradient>
<path d="M407.6 542.8 A8.2 8.2 0 1 0 419.6 543 Q419 541 416.2 539.6 Q417 541.8 415.6 543 Q413.5 541.5 411 542.6 Q410 541.6 409.6 540.8 Q408.4 541.6 407.6 542.8 Z" fill="url(#ffl)"/>
<path d="M416.2 539.6 Q420.6 542 421.7 546.5 Q420.5 544 418 543.4 Z" fill="#ffd83a"/>
<circle cx="413.8" cy="548.7" r="3.7" fill="url(#ffp)"/>
<path d="M406.2 546 Q409.5 543 413.2 545.3 Q410.8 546.2 410.2 549.6 Q408 547.8 406.2 546 Z" fill="#ff9426"/>
<!-- chrome -->
<circle cx="449.3" cy="548.2" r="8" fill="#db4437"/>
<path d="M449.3 548.2 L441.3 548.2 A8 8 0 0 0 449.3 556.2 A8 8 0 0 0 452.5 555.5 Z" fill="#0f9d58"/>
<path d="M442.4 544.2 A8 8 0 0 0 449.3 556.2 L453.3 549.3 L445.3 547.1 Z" fill="#0f9d58"/>
<path d="M449.3 544.2 L456.2 544.2 A8 8 0 0 1 449.3 556.2 L453.3 549.3 Z" fill="#f4b400"/>
<circle cx="449.3" cy="548.2" r="4.2" fill="#fff"/>
<circle cx="449.3" cy="548.2" r="3.3" fill="#4285f4"/>
<!-- scite -->
<clipPath id="scc"><circle cx="485.1" cy="548.4" r="8.3"/></clipPath>
<circle cx="485.1" cy="548.4" r="8.4" fill="url(#sph2)"/>
<g clip-path="url(#scc)" stroke="#e8e8e8" stroke-width="0.9" opacity="0.75">
<path d="M477 543 L488 553 M479 541 L491 552 M481.5 540 L493 550.5 M477 546 L484.5 553 M484.5 540 L493 547.5"/>
</g>
<!-- tray -->
<path d="M781 550.9 L785.4 546 L789.8 550.9" fill="none" stroke="#ddd" stroke-width="1"/>
<rect x="801" y="546.5" width="7.8" height="5" fill="#fff"/>
<rect x="797.5" y="551" width="10.5" height="1" fill="#bbb"/>
<circle cx="799.5" cy="546" r="1.7" fill="none" stroke="#fff" stroke-width="1"/>
<path d="M817.6 543 L820.4 544.8 L817.6 546.6 L814.9 544.8 Z M823.7 543 L826.4 544.8 L823.7 546.6 L820.9 544.8 Z M817.6 546.9 L820.4 548.7 L817.6 550.5 L814.9 548.7 Z M823.7 546.9 L826.4 548.7 L823.7 550.5 L820.9 548.7 Z M820.6 550.2 L823.3 552 L820.6 553.8 L817.9 552 Z" fill="#fff"/>
<path d="M834.5 552.6 A8 8 0 0 1 842.5 544.6 M837 552.6 A5.5 5.5 0 0 1 842.5 547.1 M839.5 552.6 A3 3 0 0 1 842.5 549.6" fill="none" stroke="#d0d0d0" stroke-width="1"/>
<circle cx="842.3" cy="552.4" r="1" fill="#fff"/>
<path d="M850.3 546.5 H852 L854.5 544.5 V552.5 L852 550.5 H850.3 Z" fill="none" stroke="#ddd" stroke-width="1"/>
<path d="M856.5 546 Q858 548.5 856.5 551 M858.5 544.8 Q860.8 548.5 858.5 552.2 M860.5 543.8 Q863.3 548.5 860.5 553.2" fill="none" stroke="#ccc" stroke-width="0.9"/>
<path d="M881 542.8 L874.5 553.5 M882.5 543.8 L876 554.2 M874 549 Q870.5 550.5 871.5 553.5 Q873 554.5 875 553 M879.5 548 Q882.5 548 882 550 Q880.5 551.5 878.5 550.5" fill="none" stroke="#ddd" stroke-width="1"/>
<!-- notification -->
<path d="M970 542 H981.9 V551.7 H976 L974 554 V551.7 H970 Z" fill="#fff"/>
<path d="M972 545 H980 M972 547.3 H980 M972 549.6 H977" stroke="#555" stroke-width="0.7"/>
<circle cx="981.4" cy="553.7" r="5.8" fill="#1b1b1b" stroke="#8a8a8a" stroke-width="0.8"/>
<path d="M980.3 551.3 L981.9 550.3 V556.8" fill="none" stroke="#fff" stroke-width="1"/>
<rect x="996.3" y="533.8" width="0.8" height="29.2" fill="#5a5a5a"/>
</svg>
<div class="tray t" style="left:892.4px;top:542.2px;font-size:9px;transform:scaleX(0.861);transform-origin:0 0">ENG</div>
<div class="tray t" style="left:921.3px;top:535.6px;font-size:10px;transform:scaleX(0.794);transform-origin:0 0">10:00 πμ</div>
<div class="tray t" style="left:919.3px;top:548.8px;font-size:10px;transform:scaleX(0.843);transform-origin:0 0">1/12/2019</div>
</body></html>
